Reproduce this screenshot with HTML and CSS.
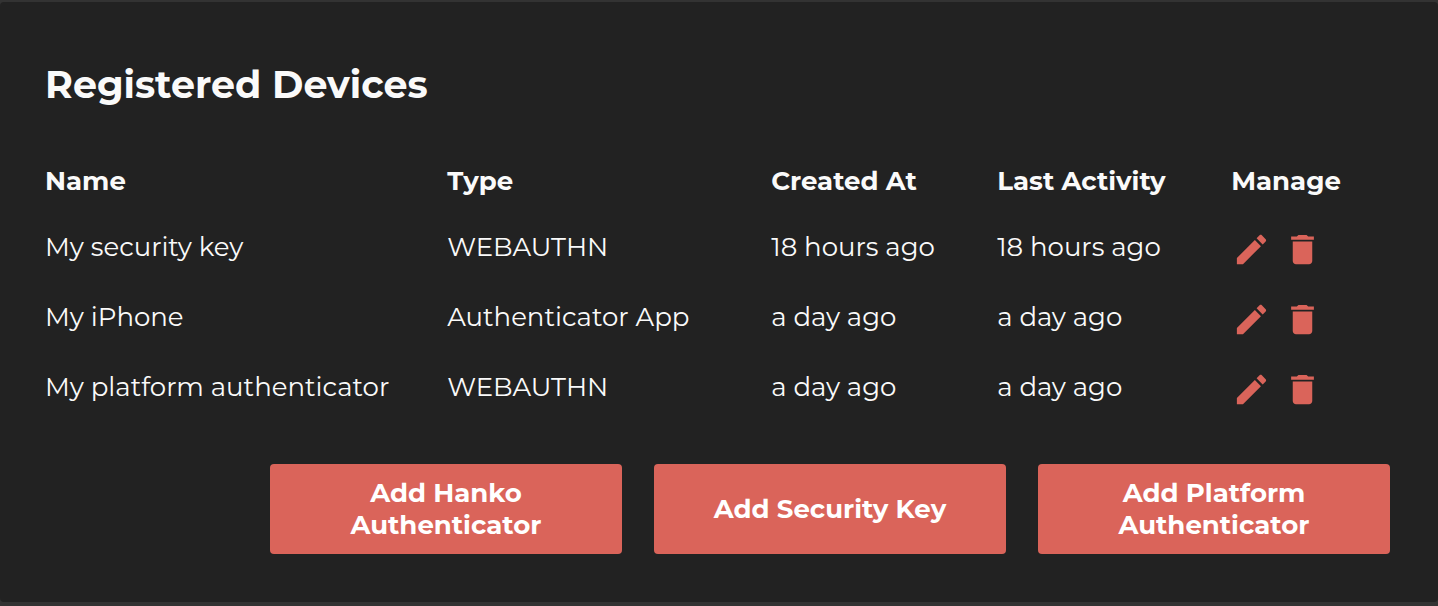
FILE: index.html
```html
<!DOCTYPE html>
<html lang="en">
<head>
<meta charset="utf-8">
<meta name="viewport" content="width=device-width, initial-scale=1">
<title>Registered Devices</title>
<link rel="stylesheet" href="styles.css">
</head>
<body>
<svg class="sprite" aria-hidden="true">
  <symbol id="edit" viewBox="0 0 24 24"><path d="M3 17.25V21h3.75L17.81 9.94l-3.75-3.75L3 17.25zM20.71 7.04c.39-.39.39-1.02 0-1.41l-2.34-2.34c-.39-.39-1.02-.39-1.41 0l-1.83 1.83 3.75 3.75 1.83-1.83z"/></symbol>
  <symbol id="delete" viewBox="0 0 24 24"><path d="M6 19c0 1.1.9 2 2 2h8c1.1 0 2-.9 2-2V7H6v12zM19 4h-3.5l-1-1h-5l-1 1H5v2h14V4z"/></symbol>
</svg>
<main class="card">
  <h1 class="title">Registered Devices</h1>
  <table class="devices">
    <colgroup><col class="col-name"><col class="col-type"><col class="col-created"><col class="col-activity"><col></colgroup>
    <thead>
      <tr><th scope="col">Name</th><th scope="col">Type</th><th scope="col">Created At</th><th scope="col">Last Activity</th><th scope="col">Manage</th></tr>
    </thead>
    <tbody>
      <tr><td>My security key</td><td>WEBAUTHN</td><td>18 hours ago</td><td>18 hours ago</td>
        <td><div class="manage"><button class="icon-button" aria-label="Edit My security key"><svg class="icon"><use href="#edit"/></svg></button><button class="icon-button" aria-label="Delete My security key"><svg class="icon"><use href="#delete"/></svg></button></div></td></tr>
      <tr><td>My iPhone</td><td>Authenticator App</td><td>a day ago</td><td>a day ago</td>
        <td><div class="manage"><button class="icon-button" aria-label="Edit My iPhone"><svg class="icon"><use href="#edit"/></svg></button><button class="icon-button" aria-label="Delete My iPhone"><svg class="icon"><use href="#delete"/></svg></button></div></td></tr>
      <tr><td>My platform authenticator</td><td>WEBAUTHN</td><td>a day ago</td><td>a day ago</td>
        <td><div class="manage"><button class="icon-button" aria-label="Edit My platform authenticator"><svg class="icon"><use href="#edit"/></svg></button><button class="icon-button" aria-label="Delete My platform authenticator"><svg class="icon"><use href="#delete"/></svg></button></div></td></tr>
    </tbody>
  </table>
  <div class="actions">
    <button class="action">Add Hanko Authenticator</button>
    <button class="action">Add Security Key</button>
    <button class="action">Add Platform Authenticator</button>
  </div>
</main>
</body>
</html>
```
FILE: styles.css
```css
* {
  box-sizing: border-box;
}

body {
  margin: 0;
  padding: 2px 0 4px;
  background: #333333;
  color: #fafafa;
  font-family: Montserrat, Inter, sans-serif;
  font-size: 26px;
  line-height: 32px;
}

.sprite {
  display: none;
}

.card {
  padding: 59px 48px 48px 45px;
  border-radius: 4px;
  background: #222222;
}

.title {
  margin: 0 0 45px;
  font-size: 38px;
  line-height: 48px;
  font-weight: 700;
}

.devices {
  width: 100%;
  border-collapse: collapse;
  table-layout: fixed;
}

.col-name {
  width: 29.9%;
}

.col-type {
  width: 24.1%;
}

.col-created {
  width: 16.8%;
}

.col-activity {
  width: 17.4%;
}

.devices th,
.devices td {
  padding: 0;
  text-align: left;
  white-space: nowrap;
}

.devices th {
  height: 58px;
  padding-bottom: 4px;
  font-weight: 700;
}

.devices td {
  height: 70px;
}

.manage {
  display: flex;
  gap: 12px;
  padding: 4px 0 0 1px;
}

.icon-button {
  display: flex;
  padding: 0;
  border: 0;
  background: none;
  color: #da645a;
  cursor: pointer;
}

.icon {
  width: 39px;
  height: 39px;
  fill: currentColor;
}

.actions {
  display: flex;
  flex-wrap: wrap;
  justify-content: flex-end;
  gap: 32px;
  margin-top: 42px;
}

.action {
  width: 352px;
  min-height: 90px;
  padding: 12px 48px;
  border: 0;
  border-radius: 4px;
  background: #da645a;
  color: #ffffff;
  font: inherit;
  font-weight: 700;
  cursor: pointer;
}
```
